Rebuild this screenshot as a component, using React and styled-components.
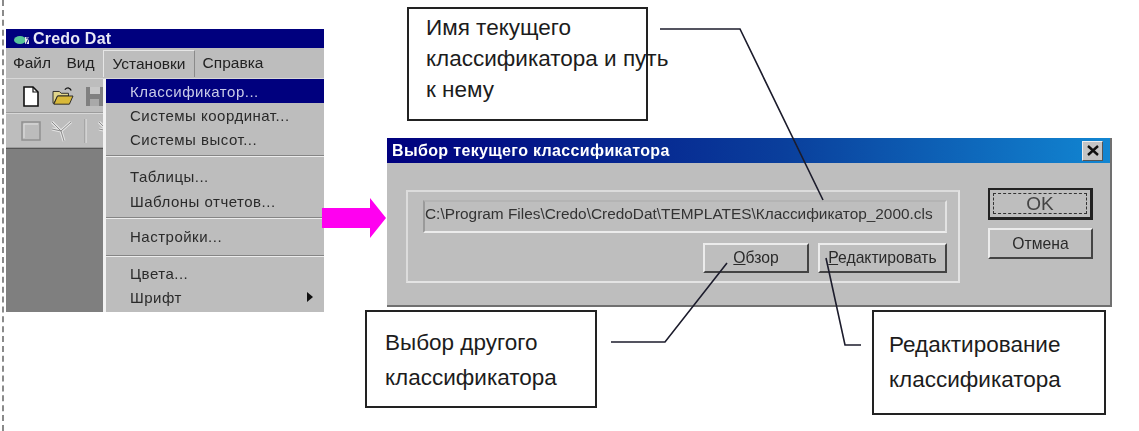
import styled, { createGlobalStyle } from 'styled-components'

const Global = createGlobalStyle`
html, body { margin: 0; padding: 0; background: #fff; }
body { font-family: "Liberation Sans", Arial, sans-serif; }
`

const Figure = styled.div`
position: relative;
width: 1139px;
height: 431px;
overflow: hidden;
background: #fff;
`

const DashLine = styled.div`
position: absolute;
left: 2px;
top: 0;
bottom: 0;
border-left: 2px dashed #8a8a8a;
`

/* left window */
const AppWindow = styled.div`
position: absolute;
left: 6px;
top: 29px;
width: 318px;
height: 283px;
display: flex;
flex-direction: column;
background: #bdbdbd;
filter: blur(0.7px);
`

const AppTitle = styled.div`
height: 19px;
background: #00007e;
color: #e8e8f4;
display: flex;
align-items: center;
gap: 3px;
padding-left: 8px;
font-size: 16px;
font-weight: 700;
letter-spacing: 0.2px;
`

const MenuBar = styled.div`
height: 30px;
display: flex;
align-items: center;
font-size: 15.5px;
color: #222;
`

const MenuLabel = styled.div`
width: ${p => p.$w}px;
height: 27px;
display: flex;
align-items: center;
justify-content: center;
box-sizing: border-box;
${p => p.$open && 'border-top: 1px solid #e6e6e6; border-left: 1px solid #e6e6e6; border-right: 1px solid #8a8a8a;'}
`

const AppBody = styled.div`
position: relative;
flex: 1;
display: flex;
flex-direction: column;
`

const ToolRow = styled.div`
height: 35px;
box-sizing: border-box;
display: flex;
align-items: center;
gap: ${p => p.$gap}px;
padding-left: 15px;
border-top: 1px solid #d8d8d8;
border-bottom: 1px solid #9c9c9c;
`

const Workspace = styled.div`
flex: 1;
width: 97px;
background: #7f7f7f;
border-top: 1px solid #555;
`

const Dropdown = styled.div`
position: absolute;
left: 97px;
right: 0;
top: 1px;
bottom: 0;
background: #bdbdbd;
border-left: 3px solid #f2f2f2;
display: flex;
flex-direction: column;
font-size: 15px;
color: #2a2a2a;
letter-spacing: 0.5px;
`

const Item = styled.div`
height: ${p => p.$h || 24.4}px;
flex: none;
display: flex;
align-items: center;
justify-content: space-between;
padding: 0 11px 0 24px;
${p => p.$active && 'background: #00007e; color: #c9cbe8; height: 24px;'}
`

const Sep = styled.div`
flex: none;
margin: ${p => p.$m};
height: 1px;
background: #858585;
border-bottom: 1px solid #ececec;
`

const SubArrow = styled.span`
width: 0;
height: 0;
border-left: 6px solid #111;
border-top: 5px solid transparent;
border-bottom: 5px solid transparent;
`

/* dialog */
const Dialog = styled.div`
position: absolute;
left: 387px;
top: 138px;
width: 725px;
height: 169px;
box-sizing: border-box;
background: #bebebe;
border-right: 2px solid #707070;
border-bottom: 2px solid #707070;
display: flex;
flex-direction: column;
filter: blur(0.7px);
color: #2a2a2a;
`

const DialogTitle = styled.div`
height: 25px;
flex: none;
display: flex;
align-items: center;
justify-content: space-between;
padding: 0 7px 0 5px;
background: linear-gradient(90deg, #00007e 0%, #0a3f9c 55%, #1186d2 100%);
color: #fff;
font-size: 16px;
font-weight: 700;
letter-spacing: 0.35px;
`

const CloseButton = styled.div`
width: 21px;
height: 20px;
box-sizing: border-box;
display: flex;
align-items: center;
justify-content: center;
background: #c4c4c4;
border: 1px solid;
border-color: #eee #555 #555 #eee;
`

const DialogBody = styled.div`
flex: 1;
display: flex;
align-items: flex-start;
padding: 17px 0 0 19px;
`

const Group = styled.div`
width: 554px;
height: 93px;
box-sizing: border-box;
margin-top: 10px;
padding: 8px 11px 0 15px;
border: 2px solid #e4e4e4;
border-top-color: #dcdcdc;
border-left-color: #dcdcdc;
`

const PathField = styled.div`
height: 33px;
box-sizing: border-box;
padding: 3px 0 0 0;
border-left: 2px solid #9a9a9a;
border-top: 2px solid #b4b4b4;
border-right: 2px solid #e2e2e2;
border-bottom: 2px solid #ececec;
font-size: 15.4px;
white-space: nowrap;
color: #333;
`

const GroupButtons = styled.div`
display: flex;
justify-content: flex-end;
gap: 9px;
margin-top: 10px;
`

const Btn = styled.div`
width: ${p => p.$w}px;
height: ${p => p.$h || 30}px;
box-sizing: border-box;
display: flex;
align-items: center;
justify-content: center;
border: 2px solid;
border-color: #ececec #444 #444 #ececec;
font-size: 15.7px;
color: #2a2a2a;
u { text-decoration: underline; }
`

const DefaultBtn = styled(Btn)`
border-color: #222;
border-width: 2px 3px 3px 2px;
font-size: 19px;
color: #444;
position: relative;
&::after {
    content: '';
    position: absolute;
    inset: 3px;
    border: 1px dashed #333;
}
`

const SideButtons = styled.div`
display: flex;
flex-direction: column;
gap: 8px;
margin: 8px 0 0 28px;
`

/* callouts */
const Callout = styled.div`
position: absolute;
left: ${p => p.$x}px;
top: ${p => p.$y}px;
width: ${p => p.$w}px;
height: ${p => p.$h}px;
box-sizing: border-box;
border: 2px solid #222;
padding: ${p => p.$pad};
font-size: 22.5px;
line-height: ${p => p.$lh}px;
color: #1c1c1c;
white-space: nowrap;
`

const Leaders = styled.svg`
position: absolute;
left: 0;
top: 0;
pointer-events: none;
`

const ArrowMark = styled.svg`
position: absolute;
left: 322px;
top: 197px;
`

const DocIcon = () => (
    <svg width="20" height="22" viewBox="0 0 20 22">
        <path d="M3 2h9l5 5v14H3z" fill="#fff" stroke="#111" strokeWidth="1.6" />
        <path d="M12 2v5h5" fill="none" stroke="#111" strokeWidth="1.2" />
    </svg>
)

const FolderIcon = () => (
    <svg width="22" height="20" viewBox="0 0 24 22">
        <path d="M1 6h7l2 2h8v3H6L2 19H1z" fill="#e0d58c" stroke="#222" />
        <path d="M6 11h17l-4 9H2z" fill="#d9b93a" stroke="#222" />
        <path d="M14 4c3-3 6-2 7 1" fill="none" stroke="#111" strokeWidth="1.4" />
    </svg>
)

const DiskIcon = () => (
    <svg width="20" height="22" viewBox="0 0 20 22">
        <path d="M1 2h18v19H1z" fill="#808080" />
        <path d="M5 2h10v7H5z" fill="#c8c8c8" />
        <path d="M5 14h9v7H5z" fill="#a9a9a9" />
    </svg>
)

const GraySquare = () => (
    <svg width="20" height="20" viewBox="0 0 20 20">
        <path d="M1 1h18v18H1z" fill="#bcbcbc" stroke="#909090" strokeWidth="1.5" />
        <path d="M3 17V3h14" fill="none" stroke="#e2e2e2" />
    </svg>
)

const ForkIcon = () => (
    <svg width="26" height="24" viewBox="0 0 26 24">
        <path d="M3 3l9 9 10-9M12 12l3 10M3 10l9 2" fill="none" stroke="#e4e4e4" strokeWidth="3" />
        <path d="M3 3l9 9 10-9M12 12l3 10M3 10l9 2" fill="none" stroke="#8c8c8c" strokeWidth="1" />
    </svg>
)

const ToolDivider = () => (
    <svg width="5" height="26" viewBox="0 0 5 26">
        <path d="M2 1v24" stroke="#8f8f8f" />
        <path d="M3 1v24" stroke="#e8e8e8" />
    </svg>
)

const AppLogo = () => (
    <svg width="16" height="12" viewBox="0 0 16 12">
        <ellipse cx="6" cy="7" rx="6" ry="4" fill="#58c49a" />
        <path d="M11 4h4v7h-4z" fill="#e8e8e8" />
        <path d="M12 5h3l-3 6" fill="none" stroke="#00007e" />
    </svg>
)

const App = () => {
    return (
        <Figure>
            <Global />
            <DashLine />

            <AppWindow>
                <AppTitle><AppLogo />Credo Dat</AppTitle>
                <MenuBar>
                    <MenuLabel $w={52}>Файл</MenuLabel>
                    <MenuLabel $w={45}>Вид</MenuLabel>
                    <MenuLabel $w={92} $open>Установки</MenuLabel>
                    <MenuLabel $w={76}>Справка</MenuLabel>
                </MenuBar>
                <AppBody>
                    <ToolRow $gap={11}>
                        <DocIcon />
                        <FolderIcon />
                        <DiskIcon />
                    </ToolRow>
                    <ToolRow $gap={8}>
                        <GraySquare />
                        <ForkIcon />
                        <ToolDivider />
                        <ForkIcon />
                    </ToolRow>
                    <Workspace />
                    <Dropdown>
                        <Item $active>Классификатор...</Item>
                        <Item>Системы координат...</Item>
                        <Item>Системы высот...</Item>
                        <Sep $m="3px 0 8px" />
                        <Item>Таблицы...</Item>
                        <Item>Шаблоны отчетов...</Item>
                        <Sep $m="3.4px 0 6px" />
                        <Item $h={24}>Настройки...</Item>
                        <Sep $m="6px 0 5px" />
                        <Item $h={23}>Цвета...</Item>
                        <Item>Шрифт<SubArrow /></Item>
                    </Dropdown>
                </AppBody>
            </AppWindow>

            <ArrowMark width="66" height="42" viewBox="0 0 66 42">
                <path d="M0 11h48V1l16 20-16 20V31H0z" fill="#ff00f0" />
            </ArrowMark>

            <Dialog>
                <DialogTitle>
                    Выбор текущего классификатора
                    <CloseButton>
                        <svg width="12" height="11" viewBox="0 0 12 11">
                            <path d="M1 1l10 9M11 1L1 10" stroke="#111" strokeWidth="2.4" />
                        </svg>
                    </CloseButton>
                </DialogTitle>
                <DialogBody>
                    <Group>
                        <PathField>C:\Program Files\Credo\CredoDat\TEMPLATES\Классификатор_2000.cls</PathField>
                        <GroupButtons>
                            <Btn $w={106}><span><u>О</u>бзор</span></Btn>
                            <Btn $w={129}><span><u>Р</u>едактировать</span></Btn>
                        </GroupButtons>
                    </Group>
                    <SideButtons>
                        <DefaultBtn $w={105} $h={32}>OK</DefaultBtn>
                        <Btn $w={105} $h={31}>Отмена</Btn>
                    </SideButtons>
                </DialogBody>
            </Dialog>

            <Callout $x={407} $y={7} $w={241} $h={114} $pad="3px 0 0 17px" $lh={31}>
                Имя текущего<br />классификатора и путь<br />к нему
            </Callout>
            <Callout $x={365} $y={310} $w={232} $h={98} $pad="13px 0 0 18px" $lh={35}>
                Выбор другого<br />классификатора
            </Callout>
            <Callout $x={872} $y={310} $w={234} $h={105} $pad="15px 0 0 15px" $lh={35}>
                Редактирование<br />классификатора
            </Callout>

            <Leaders width="1139" height="431" viewBox="0 0 1139 431">
                <g fill="none" stroke="#1c1c2c" strokeWidth="1.6">
                    <path d="M660 29H740L823 200" />
                    <path d="M611 342H665L727 263" />
                    <path d="M826 258L845 345H861" />
                </g>
            </Leaders>
        </Figure>
    )
}

export default App
